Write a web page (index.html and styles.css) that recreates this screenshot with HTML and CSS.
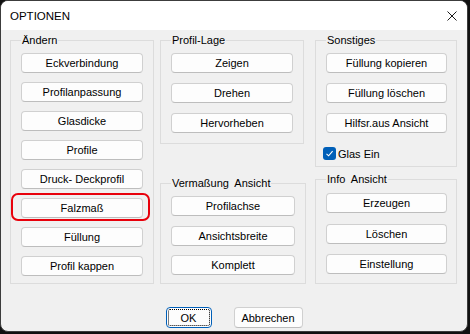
FILE: index.html
```html
<!DOCTYPE html>
<html lang="de">
<head>
    <meta charset="UTF-8">
    <meta name="viewport" content="width=device-width, initial-scale=1.0">
    <title>OPTIONEN</title>
    <link rel="stylesheet" href="styles.css">
</head>
<body>
    <div class="window">
        <div class="titlebar">
            <span class="title">OPTIONEN</span>
            <button class="close" aria-label="Schließen">
                <svg width="10" height="10" viewBox="0 0 10 10">
                    <path d="M0.5 0.5 L9.5 9.5 M9.5 0.5 L0.5 9.5" stroke="#1a1a1a" stroke-width="1" fill="none"/>
                </svg>
            </button>
        </div>

        <div class="content">
            <div class="columns">
                <!-- linke Spalte -->
                <fieldset class="group group-aendern">
                    <legend>Ändern</legend>
                    <div class="btn-list">
                        <button class="btn">Eckverbindung</button>
                        <button class="btn">Profilanpassung</button>
                        <button class="btn">Glasdicke</button>
                        <button class="btn">Profile</button>
                        <button class="btn">Druck- Deckprofil</button>
                        <div class="marked"><button class="btn">Falzmaß</button></div>
                        <button class="btn">Füllung</button>
                        <button class="btn">Profil kappen</button>
                    </div>
                </fieldset>

                <!-- mittlere Spalte -->
                <div class="col col-mid">
                    <fieldset class="group group-lage">
                        <legend>Profil-Lage</legend>
                        <div class="btn-list">
                            <button class="btn">Zeigen</button>
                            <button class="btn">Drehen</button>
                            <button class="btn">Hervorheben</button>
                        </div>
                    </fieldset>
                    <fieldset class="group group-mass">
                        <legend>Vermaßung&nbsp; Ansicht</legend>
                        <div class="btn-list">
                            <button class="btn">Profilachse</button>
                            <button class="btn">Ansichtsbreite</button>
                            <button class="btn">Komplett</button>
                        </div>
                    </fieldset>
                </div>

                <!-- rechte Spalte -->
                <div class="col col-right">
                    <fieldset class="group group-sonst">
                        <legend>Sonstiges</legend>
                        <div class="btn-list">
                            <button class="btn">Füllung kopieren</button>
                            <button class="btn">Füllung löschen</button>
                            <button class="btn">Hilfsr.aus Ansicht</button>
                        </div>
                        <label class="check">
                            <span class="check-box">
                                <svg width="9" height="9" viewBox="0 0 9 9">
                                    <path d="M1.5 4.8 L3.6 6.8 L7.6 2.2" stroke="#fff" stroke-width="1.1" fill="none"/>
                                </svg>
                            </span>
                            Glas Ein
                        </label>
                    </fieldset>
                    <fieldset class="group group-info">
                        <legend>Info&nbsp; Ansicht</legend>
                        <div class="btn-list">
                            <button class="btn">Erzeugen</button>
                            <button class="btn">Löschen</button>
                            <button class="btn">Einstellung</button>
                        </div>
                    </fieldset>
                </div>
            </div>

            <div class="actions">
                <button class="btn btn-ok">OK</button>
                <button class="btn btn-cancel">Abbrechen</button>
            </div>
        </div>
    </div>
</body>
</html>
```

FILE: styles.css
```css
body {
    margin: 0;
    padding: 0;
    background-color: #111;
    font-family: "Liberation Sans", Arial, sans-serif;
    font-size: 11px;
    color: #000;
}
.window {
    width: 466px;
    height: 330px;
    background-color: #f0f0f0;
    border: 1px solid #3c3c3c;
    border-radius: 8px;
    overflow: hidden;
}
.titlebar {
    height: 29px;
    background-color: #fff;
    display: flex;
    align-items: center;
    justify-content: space-between;
    padding: 0 9px 0 9px;
}
.title {
    font-size: 11.5px;
    padding-top: 1px;
}
.close {
    border: none;
    background: none;
    padding: 0;
    width: 10px;
    height: 10px;
    display: flex;
    margin-top: 1px;
    margin-right: 1px;
}
.content {
    padding: 4px 0 0 9px;
}
.columns {
    display: flex;
    align-items: flex-start;
}
.col {
    display: flex;
    flex-direction: column;
}
.col-mid {
    margin-left: 6px;
}
.col-right {
    margin-left: 9px;
}
.group {
    margin: 0;
    border: 1px solid #dcdcdc;
    padding: 7px 10px 7px 10px;
    min-width: 0;
}
.group legend {
    padding: 0 1px;
    line-height: 12px;
    font-size: 11px;
}
.group-aendern {
    width: 144px;
    box-sizing: border-box;
}
.group-lage {
    width: 144px;
    box-sizing: border-box;
    padding-bottom: 10px;
}
.group-mass {
    width: 146px;
    box-sizing: border-box;
    margin-top: 33px;
    padding-bottom: 8px;
}
.group-sonst {
    width: 142px;
    box-sizing: border-box;
    padding-right: 9px;
    padding-bottom: 6px;
}
.group-info {
    width: 142px;
    box-sizing: border-box;
    padding-right: 9px;
    margin-top: 6px;
    padding-top: 8px;
    padding-bottom: 9px;
}
.btn-list {
    display: flex;
    flex-direction: column;
    gap: 10px;
}
.group-aendern .btn-list {
    gap: 9px;
}
.group-mass .btn-list {
    gap: 9.5px;
}
.group-info .btn-list {
    gap: 10.5px;
}
.btn {
    display: block;
    width: 100%;
    height: 20px;
    padding: 0;
    background-color: #fdfdfd;
    border: 1px solid #d0d0d0;
    border-bottom-color: #bdbdbd;
    border-radius: 4px;
    font-family: "Liberation Sans", Arial, sans-serif;
    font-size: 11px;
    color: #000;
    text-align: center;
    cursor: pointer;
}
.marked {
    margin: -5px -7px -3px -10px;
    padding: 3px 5px 1px 8px;
    border: 2px solid #e8000b;
    border-radius: 7px;
}
.check {
    display: flex;
    align-items: center;
    gap: 2px;
    margin-top: 14px;
    margin-left: -3px;
    height: 13px;
}
.check-box {
    width: 13px;
    height: 13px;
    box-sizing: border-box;
    background-color: #005fb8;
    border-radius: 3px;
    display: flex;
    align-items: center;
    justify-content: center;
}
.actions {
    display: flex;
    justify-content: center;
    gap: 22px;
    margin-top: 23px;
    padding-right: 9px;
}
.actions .btn {
    height: 21px;
}
.btn-ok {
    width: 46px;
    border-color: #005fb8;
    outline: 1px dotted #000;
    outline-offset: -3px;
}
.btn-cancel {
    width: 69px;
}
```
